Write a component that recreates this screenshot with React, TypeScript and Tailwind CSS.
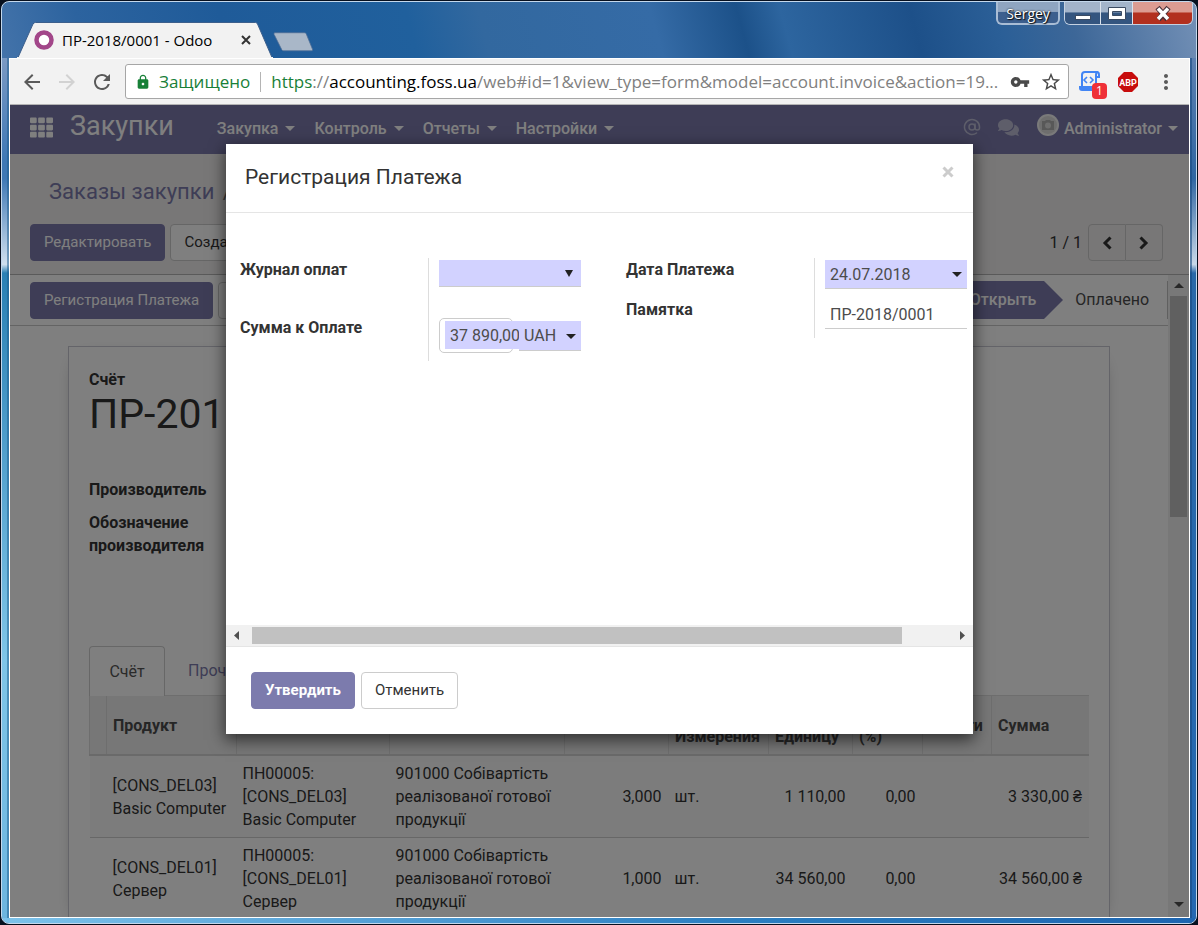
import type { ReactNode } from "react";
import { FaComments, FaTh } from "react-icons/fa";
import { MdArrowBack, MdArrowForward, MdLock, MdMoreVert, MdRefresh, MdStarBorder, MdVpnKey } from "react-icons/md";
import { AtSign } from "lucide-react";

const NAV_ITEMS = ["Закупка", "Контроль", "Отчеты", "Настройки"];

const INVOICE_LINES = [
  {
    product: "[CONS_DEL03] Basic Computer",
    description: "ПН00005: [CONS_DEL03] Basic Computer",
    account: "901000 Собівартість реалізованої готової продукції",
    quantity: "3,000",
    unit: "шт.",
    price: "1 110,00",
    discount: "0,00",
    total: "3 330,00 ₴"
  },
  {
    product: "[CONS_DEL01] Сервер",
    description: "ПН00005: [CONS_DEL01] Сервер",
    account: "901000 Собівартість реалізованої готової продукції",
    quantity: "1,000",
    unit: "шт.",
    price: "34 560,00",
    discount: "0,00",
    total: "34 560,00 ₴"
  }
];

function Caret({ className = "" }: { className?: string }) {
  return (
    <svg viewBox="0 0 10 5" className={`h-[5px] w-[10px] fill-current ${className}`} aria-hidden>
      <path d="M0 0h10L5 5z" />
    </svg>
  );
}

function Chevron({ flip = false }: { flip?: boolean }) {
  return (
    <svg viewBox="0 0 10 14" className={`h-[14px] w-[10px] ${flip ? "rotate-180" : ""}`} aria-hidden>
      <path d="M8.5 1.5 3 7l5.500 5.500" fill="none" stroke="currentColor" strokeWidth="3" />
    </svg>
  );
}

function Button({ primary = false, bold = false, children }: { primary?: boolean; bold?: boolean; children: ReactNode }) {
  return (
    <button
      type="button"
      className={`h-[37px] shrink-0 whitespace-nowrap rounded border px-[13px] text-[15px] ${
        primary ? "border-[#7c7bad] bg-[#7c7bad] text-white" : "border-[#cccccc] bg-white text-[#333333]"
      } ${bold ? "font-bold" : ""}`}
    >
      {children}
    </button>
  );
}

function WindowTitleBar() {
  return (
    <header className="flex h-14 shrink-0 items-end justify-between">
      <div className="flex items-end pl-[15px]">
        <div className="relative h-[36px] w-[256px]">
          <svg viewBox="0 0 256 36" className="absolute inset-0 h-full w-full" aria-hidden>
            <path d="M0 35.500h1L16 2q1-1.500 2.500-1.500h220q1.500 0 2 1.500L255 35.500v.5H0z" fill="#f2f2f2" stroke="#3c5f8c" strokeWidth="1" />
            <path d="M0 36h256" stroke="#f2f2f2" strokeWidth="2" />
          </svg>
          <div className="relative flex h-full items-center pr-[22px] pl-[17px]">
            <svg viewBox="0 0 20 20" className="h-5 w-5" aria-hidden>
              <circle cx="10" cy="10" r="7.500" fill="#fff" stroke="#a24689" strokeWidth="4.500" />
            </svg>
            <span className="ml-2 flex-1 whitespace-nowrap font-['Open_Sans',sans-serif] text-[15px] text-black">
              ПР-2018/0001 - Odoo
            </span>
            <button type="button" aria-label="Закрыть вкладку" className="text-[#333333]">
              <svg viewBox="0 0 10 10" className="h-[10px] w-[10px]">
                <path d="M1 1l8 8M9 1L1 9" stroke="currentColor" strokeWidth="2" />
              </svg>
            </button>
          </div>
        </div>
        <button type="button" aria-label="Новая вкладка" className="mb-[6px]">
          <svg viewBox="0 0 42 20" className="h-5 w-[41px]">
            <path d="M2 .5h30q1.500 0 2 1l6.500 16q.5 1.500-1 1.500H11q-1.500 0-2-1L1 2q-.5-1.500 1-1.500z" fill="#a9b7c8" stroke="#4c6c95" strokeWidth=".8" />
          </svg>
        </button>
      </div>
      <div className="flex items-start gap-1 self-start pr-[3px]">
        <button
          type="button"
          className="h-[23px] w-[64px] rounded-b-md border-2 border-t-0 border-[#a9bdd5] bg-linear-to-b from-[#8fa5c1] from-45% to-[#3c5f8e] to-50% pt-[2px] font-['Open_Sans',sans-serif] text-[14px] leading-5 text-white [text-shadow:0_0_2px_#111,1px_1px_1px_#111]"
        >
          Sergey
        </button>
        <div className="flex h-[23px] overflow-hidden rounded-b-md border border-t-0 border-[#c5d2e2]">
          <button type="button" aria-label="Свернуть" className="flex w-[35px] justify-center bg-linear-to-b from-[#a3b4ca] from-45% to-[#34557f] to-50%">
            <svg viewBox="0 0 18 22" className="h-[22px] w-[18px]">
              <rect x="1.500" y="13.500" width="15" height="4" fill="#fff" stroke="#3b4b62" />
            </svg>
          </button>
          <button type="button" aria-label="Развернуть" className="flex w-[33px] justify-center border-x border-[#dbe3ed] bg-linear-to-b from-[#a3b4ca] from-45% to-[#34557f] to-50%">
            <svg viewBox="0 0 18 22" className="h-[22px] w-[18px]">
              <path d="M.5 5.500h17v12H.5zM4.500 9.500v4h9v-4z" fill="#fff" fillRule="evenodd" stroke="#3b4b62" />
            </svg>
          </button>
          <button type="button" aria-label="Закрыть" className="flex w-[59px] justify-center bg-linear-to-b from-[#dc9c92] from-45% to-[#b2301f] to-50%">
            <svg viewBox="0 0 18 22" className="h-[22px] w-[18px]">
              <path d="M3.500 5.500l10 12M14.500 5.500l-10 12" stroke="#4b3038" strokeWidth="5.500" />
              <path d="M4 6.500l10 10.500M14 6.500L4 17" stroke="#fff" strokeWidth="3.500" />
            </svg>
          </button>
        </div>
      </div>
    </header>
  );
}

function BrowserToolbar() {
  return (
    <div className="flex h-[46px] shrink-0 items-center border-b border-[#b4b4b4] bg-[#f2f2f2] pr-[11px] pl-[10px] font-['Open_Sans',sans-serif] text-[#5a5a5a]">
      <div className="flex items-center gap-[11px]">
        <button type="button" aria-label="Назад">
          <MdArrowBack className="h-6 w-6" />
        </button>
        <button type="button" aria-label="Вперёд" className="text-[#d2d2d2]">
          <MdArrowForward className="h-6 w-6" />
        </button>
        <button type="button" aria-label="Обновить">
          <MdRefresh className="h-6 w-6" />
        </button>
      </div>
      <div className="ml-[11px] flex h-[35px] min-w-0 flex-1 items-center rounded-[3px] border border-[#a6a6a6] bg-white pr-[6px] pl-[9px] text-[17px]">
        <MdLock className="h-4 w-4 shrink-0 text-[#188038]" aria-hidden />
        <span className="ml-2 text-[#188038]">Защищено</span>
        <span className="mr-[10px] ml-[10px] h-5 w-px bg-[#b4b4b4]" />
        <span className="min-w-0 flex-1 overflow-hidden whitespace-nowrap text-[#808080]">
          <span className="text-[#188038]">https</span>://<span className="text-black">accounting.foss.ua</span>
          /web#id=1&amp;view_type=form&amp;model=account.invoice&amp;action=19...
        </span>
        <MdVpnKey className="ml-1 h-5 w-5 shrink-0 text-[#4a4a4a]" aria-label="Пароли" />
        <MdStarBorder className="ml-[10px] h-[22px] w-[22px] shrink-0 text-[#4a4a4a]" aria-label="Добавить в закладки" />
      </div>
      <button type="button" aria-label="Скрипты" className="relative ml-[9px]">
        <svg viewBox="0 0 28 28" className="h-7 w-7" fill="none">
          <path d="M4 20V7q0-3 3-3h13q-2 0-2 3v2h3V7q0-3-2-3M18 9v9" stroke="#4285f4" strokeWidth="2" />
          <path d="M9 9l-3 3 3 3M12 9l3 3-3 3" stroke="#4285f4" strokeWidth="1.600" />
          <path d="M1 18h16v5H4q-3 0-3-3z" fill="#4285f4" />
        </svg>
        <span className="absolute top-[15px] left-[14px] h-4 w-[15px] rounded-sm bg-[#ef3038] text-[12px] leading-4 text-white">1</span>
      </button>
      <button type="button" aria-label="Adblock Plus" className="ml-[11px]">
        <svg viewBox="0 0 22 22" className="h-[22px] w-[22px]">
          <path d="M7 1h8l6 6v8l-6 6H7l-6-6V7z" fill="#c70d0d" />
          <text x="11" y="14.500" textAnchor="middle" fontSize="9" fontWeight="700" fill="#fff" fontFamily="Roboto, sans-serif">
            ABP
          </text>
        </svg>
      </button>
      <button type="button" aria-label="Меню" className="ml-[15px]">
        <MdMoreVert className="h-6 w-6" />
      </button>
    </div>
  );
}

function AppNavbar() {
  return (
    <nav className="flex h-[49px] shrink-0 items-center bg-[#7c7bad] pr-[11px] pl-5 text-white">
      <button type="button" aria-label="Приложения" className="pb-1">
        <FaTh className="h-[23px] w-[23px]" />
      </button>
      <a href="#home" className="ml-[17px] pb-2 text-[27px] leading-8">
        Закупки
      </a>
      <ul className="ml-[43px] flex flex-1 items-center gap-[19px] pb-[2px] text-base font-medium">
        {NAV_ITEMS.map((item) => (
          <li key={item}>
            <a href="#menu" className="flex items-center gap-[7px]">
              {item}
              <Caret />
            </a>
          </li>
        ))}
      </ul>
      <AtSign className="mr-[17px] mb-[6px] h-[18px] w-[18px] text-[#bcbcd4]" aria-hidden />
      <FaComments className="mr-[18px] mb-1 h-[21px] w-[21px] text-[#bcbcd4]" aria-hidden />
      <a href="#user" className="flex items-center pb-[2px] text-base font-medium">
        <svg viewBox="0 0 22 22" className="mr-[5px] mb-2 h-[22px] w-[22px]" aria-hidden>
          <circle cx="11" cy="11" r="11" fill="#f4f4f4" />
          <circle cx="11" cy="11" r="9" fill="#dcdcdc" />
          <path d="M5 7h3l1-1h4l1 1h3v9H5z" fill="#b0b0b0" />
          <circle cx="11" cy="11.500" r="3" fill="#dcdcdc" />
        </svg>
        Administrator
        <Caret className="ml-[6px]" />
      </a>
    </nav>
  );
}

function ControlPanel() {
  return (
    <div className="flex h-[121px] shrink-0 flex-col justify-between border-b border-[#b5b5b5] bg-[#f0eeee] px-5 pt-5 pb-[13px]">
      <div className="pl-[19px] text-[22px] leading-9 text-[#7c7bad]">
        <a href="#orders">Заказы закупки</a> <span className="pl-[3px] text-[#777777]">/</span>
      </div>
      <div className="flex items-center justify-between pr-[6px]">
        <div className="flex gap-[5px]">
          <Button primary>Редактировать</Button>
          <Button>Создать</Button>
        </div>
        <div className="flex items-center text-base">
          <span className="mr-[6px]">1 / 1</span>
          <button type="button" aria-label="Предыдущая" className="flex h-[37px] w-[38px] items-center justify-center rounded-l border border-[#cccccc]">
            <Chevron />
          </button>
          <button type="button" aria-label="Следующая" className="flex h-[37px] w-[37px] items-center justify-center rounded-r border border-l-0 border-[#cccccc]">
            <Chevron flip />
          </button>
        </div>
      </div>
    </div>
  );
}

function StatusBar() {
  return (
    <div className="flex h-[51px] shrink-0 items-center justify-between border-b border-[#c8c8c8] pl-5 text-base">
      <div className="flex gap-[5px]">
        <Button primary>Регистрация Платежа</Button>
        <Button>Кредит-нота</Button>
      </div>
      <div className="flex h-[38px] items-center border-r border-[#c0c0c0] pr-[18px] text-[#4c4c4c]">
        <div className="relative flex h-full w-[120px] items-center justify-end bg-[#7c7bad] pr-[8px] font-medium text-white">
          Открыть
          <svg viewBox="0 0 19 38" className="absolute top-0 left-full h-full w-[19px]" aria-hidden>
            <path d="M0 0l19 19L0 38z" fill="#7c7bad" />
          </svg>
        </div>
        <span className="ml-[31px]">Оплачено</span>
      </div>
    </div>
  );
}

function InvoiceTable() {
  const head = "border-l border-[#dddddd] px-[6px] py-[6px] text-left font-bold";
  const cell = "px-[6px] py-[6px]";
  const amount = "py-[6px] pr-[7px] text-right whitespace-nowrap";
  return (
    <table className="w-full table-fixed text-base leading-[23px]">
      <colgroup>
        <col className="w-[17px]" />
        <col className="w-[130px]" />
        <col className="w-[153px]" />
        <col className="w-[175px]" />
        <col className="w-[104px]" />
        <col className="w-[100px]" />
        <col className="w-[84px]" />
        <col className="w-[70px]" />
        <col className="w-[69px]" />
        <col />
      </colgroup>
      <thead className="border-b-2 border-[#d4d4d4] bg-[#eeeeee] text-[#4c4c4c]">
        <tr>
          <th className={head} />
          <th className={head}>Продукт</th>
          <th className={head}>Описание</th>
          <th className={head}>Счёт</th>
          <th className={head}>Количество</th>
          <th className={head}>Единица Измерения</th>
          <th className={head}>Цена за Единицу</th>
          <th className={head}>Скидка (%)</th>
          <th className={head}>Налоги</th>
          <th className={head}>Сумма</th>
        </tr>
      </thead>
      <tbody>
        {INVOICE_LINES.map((line) => (
          <tr key={line.product} className="border-b border-[#cfcfcf] odd:bg-[#f9f9f9]">
            <td />
            <td className={cell}>{line.product}</td>
            <td className={cell}>{line.description}</td>
            <td className={cell}>{line.account}</td>
            <td className={amount}>{line.quantity}</td>
            <td className={cell}>{line.unit}</td>
            <td className={amount}>{line.price}</td>
            <td className={amount}>{line.discount}</td>
            <td />
            <td className={amount}>{line.total}</td>
          </tr>
        ))}
      </tbody>
    </table>
  );
}

function InvoiceSheet() {
  return (
    <div className="mx-[58px] mt-5 flex-1 border border-[#c8c8d3] bg-white px-5 pt-[21px] shadow-[0_5px_20px_-15px_#000]">
      <p className="text-base leading-6 font-bold">Счёт</p>
      <h1 className="text-[41px] leading-[44px]">ПР-2018/0001</h1>
      <dl className="mt-[42px] w-[140px] text-base leading-[23px] font-bold">
        <dt>Производитель</dt>
        <dt className="mt-[10px]">Обозначение производителя</dt>
      </dl>
      <div className="mt-[89px] flex h-[50px] items-end border-b border-[#dddddd] text-base">
        <a href="#invoice" className="-mb-px flex h-[50px] w-[76px] items-center justify-center rounded-t border border-b-0 border-[#cfcfcf] bg-white text-[#555555]">
          Счёт
        </a>
        <a href="#other" className="flex h-[49px] items-center px-[23px] text-[#7c7bad]">
          Прочая информация
        </a>
      </div>
      <InvoiceTable />
    </div>
  );
}

function PageScrollbar() {
  return (
    <div className="flex w-[21px] shrink-0 flex-col items-center justify-between bg-[#f1f1f1] text-[#505050]" aria-hidden>
      <div className="flex w-full flex-col items-center">
        <Caret className="my-2 rotate-180" />
        <div className="h-[221px] w-[17px] bg-[#c1c1c1]" />
      </div>
      <Caret className="mb-[10px]" />
    </div>
  );
}

function DialogScrollbar() {
  return (
    <div className="flex h-[21px] items-center justify-between bg-[#f1f1f1] px-2 text-[#505050]" aria-hidden>
      <svg viewBox="0 0 5 9" className="h-[9px] w-[5px] fill-current">
        <path d="M5 0v9L0 4.500z" />
      </svg>
      <div className="mr-auto ml-[13px] h-[17px] w-[650px] bg-[#c1c1c1]" />
      <svg viewBox="0 0 5 9" className="h-[9px] w-[5px] fill-current">
        <path d="M0 0v9l5-4.500z" />
      </svg>
    </div>
  );
}

function PaymentDialog() {
  const label = "block text-base font-bold text-[#333333]";
  return (
    <section role="dialog" aria-labelledby="dialog-title" className="flex w-full max-w-[747px] flex-col self-start bg-white text-[#4c4c4c] shadow-[0_5px_15px_1px_rgba(0,0,0,0.6)]">
      <div className="flex h-[69px] items-center justify-between border-b border-[#e5e5e5] pr-[19px] pl-[19px]">
        <h4 id="dialog-title" className="text-[21px] text-[#333333]">
          Регистрация Платежа
        </h4>
        <button type="button" aria-label="Закрыть окно" className="mb-3 text-[#cccccc]">
          <svg viewBox="0 0 12 12" className="h-3 w-3">
            <path d="M1.500 1.500l9 9M10.500 1.500l-9 9" stroke="currentColor" strokeWidth="3" />
          </svg>
        </button>
      </div>
      <form className="flex h-[412px] items-start gap-[45px] overflow-hidden px-[14px] pt-[45px] text-base">
        <div className="grid grid-cols-[188px_153px] leading-6">
          <div className="flex flex-col gap-[34px]">
            <label htmlFor="journal" className={label}>
              Журнал оплат
            </label>
            <label htmlFor="amount" className={label}>
              Сумма к Оплате
            </label>
          </div>
          <div className="border-l border-[#dddddd] pt-[2px] pb-2 pl-[10px]">
            <div className="relative">
              <select id="journal" className="h-[27px] w-full appearance-none border-b border-[#cccccc] bg-[#d2d2ff]">
                <option value="" />
              </select>
              <svg viewBox="0 0 8 7" className="pointer-events-none absolute top-[10px] right-2 h-[7px] w-2 fill-[#222222]" aria-hidden>
                <path d="M0 0h8L4 7z" />
              </svg>
            </div>
            <div className="mt-[31px] flex">
              <span className="h-[35px] w-[74px] rounded-[5px] border border-[#cccccc] pt-[2px] pl-[5px]">
                <input id="amount" defaultValue="37 890,00" className="block h-7 w-[75px] bg-[#d2d2ff] pl-[5px]" />
              </span>
              <span className="relative mt-[3px] ml-[6px] flex-1">
                <select aria-label="Валюта" className="h-[30px] w-full appearance-none border-b border-[#cccccc] bg-[#d2d2ff] pl-[5px]">
                  <option>UAH</option>
                </select>
                <Caret className="pointer-events-none absolute top-[13px] right-[5px] text-[#222222]" />
              </span>
            </div>
          </div>
        </div>
        <div className="grid grid-cols-[188px_153px] leading-6">
          <div className="flex flex-col gap-4">
            <label htmlFor="date" className={label}>
              Дата Платежа
            </label>
            <label htmlFor="memo" className={label}>
              Памятка
            </label>
          </div>
          <div className="border-l border-[#dddddd] pt-[2px] pb-[9px] pl-[10px]">
            <div className="relative">
              <input id="date" defaultValue="24.07.2018" className="block h-[29px] w-full border-b border-[#cccccc] bg-[#d2d2ff] px-[5px]" />
              <Caret className="pointer-events-none absolute top-3 right-[5px] text-[#222222]" />
            </div>
            <input id="memo" defaultValue="ПР-2018/0001" className="mt-[11px] block h-[29px] w-full border-b border-[#cccccc] px-[5px]" />
          </div>
        </div>
      </form>
      <DialogScrollbar />
      <div className="flex gap-[6px] border-t border-[#e5e5e5] px-[25px] py-[25px]">
        <Button primary bold>
          Утвердить
        </Button>
        <Button>Отменить</Button>
      </div>
    </section>
  );
}

export default function App() {
  return (
    <div className="h-screen bg-[#07101f] p-px">
      <div className="flex h-full flex-col overflow-hidden rounded-lg border border-[#c4d8ec] bg-[linear-gradient(75deg,#7b98c1,#6489b8_8%,#2c639f_22%,#1f5b99_32%,#20609d_45%,#32689f_50%,#356ba6_62%,#1c5189_68%,#2d659f_71%,#1d5089_80%,#2b5f97_86%,#3d6798_91%,#7390b6)]">
        <WindowTitleBar />
        <div className="flex min-h-0 flex-1">
          <div className="w-[7px] shrink-0 border-r-2 border-[#1c5a8a]/50 bg-[linear-gradient(#7b9ac4,#3f78b5_12%,#3f78b5_14%,#d0e0ee_24%,#2a80b4_25%,#7fc5e8_70%,#6db5df)]" />
          <main className="flex min-w-0 flex-1 flex-col border border-white">
            <BrowserToolbar />
            <div className="relative flex min-h-0 flex-1 flex-col overflow-hidden bg-white font-[Roboto,sans-serif] text-[#333333]">
              <AppNavbar />
              <ControlPanel />
              <div className="flex min-h-0 flex-1">
                <div className="flex min-w-0 flex-1 flex-col overflow-hidden">
                  <StatusBar />
                  <InvoiceSheet />
                </div>
                <PageScrollbar />
              </div>
              <div className="absolute inset-0 flex justify-center bg-black/50 pt-[39px]">
                <PaymentDialog />
              </div>
            </div>
          </main>
          <div className="w-[6px] shrink-0 border-l-2 border-[#174a80]/60 bg-[linear-gradient(#5c80b0,#2f66a2_14%,#c8d8e8_24%,#2a68a8_25%,#2468b2)]" />
        </div>
        <div className="h-[5px] shrink-0 bg-linear-to-r from-[#7cc2ea] via-[#2c80c2] via-60% to-[#1d65b0]" />
      </div>
    </div>
  );
}
